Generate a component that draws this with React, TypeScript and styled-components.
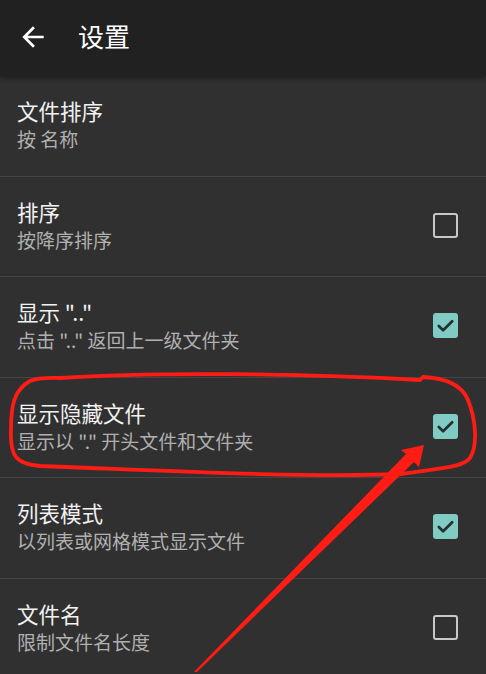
import React from 'react'
import styled, { createGlobalStyle } from 'styled-components'

type Pref = {
  title: string
  summary: string
  checked?: boolean
}

const PREFS: Pref[] = [
  { title: '文件排序', summary: '按 名称' },
  { title: '排序', summary: '按降序排序', checked: false },
  { title: '显示 ".."', summary: '点击 ".." 返回上一级文件夹', checked: true },
  { title: '显示隐藏文件', summary: '显示以 "." 开头文件和文件夹', checked: true },
  { title: '列表模式', summary: '以列表或网格模式显示文件', checked: true },
  { title: '文件名', summary: '限制文件名长度', checked: false },
]

const GlobalStyle = createGlobalStyle`
  html, body {
    margin: 0;
    padding: 0;
    background: #303030;
  }
  body {
    font-family: Roboto, "Noto Sans CJK SC", sans-serif;
  }
`

export default function App() {
  return (
    <Page>
      <GlobalStyle />
      <Toolbar>
        <BackButton>
          <svg width="32" height="32" viewBox="0 0 24 24">
            <path fill="#fff" d="M20 11H7.83l5.59-5.59L12 4l-8 8 8 8 1.41-1.41L7.83 13H20v-2z" />
          </svg>
        </BackButton>
        <ToolbarTitle>设置</ToolbarTitle>
      </Toolbar>
      <List>
        {PREFS.map((p) => (
          <Row key={p.title}>
            <Texts>
              <Title>{p.title}</Title>
              <Summary>{p.summary}</Summary>
            </Texts>
            {p.checked !== undefined && <Checkbox checked={p.checked} />}
          </Row>
        ))}
      </List>
      <Markup width="486" height="674" viewBox="0 0 486 674">
        <path
          d="M 60 378 C 150 372, 300 373, 420 380 L 423 377 C 445 378, 462 385, 468 400 C 476 420, 478 445, 470 458 C 462 468, 440 468, 400 474 C 300 478, 150 470, 40 466 C 15 464, 10 455, 11 430 C 11 405, 14 390, 30 381 C 40 377, 50 378, 60 378 Z"
          fill="none"
          stroke="#ff1c14"
          strokeWidth="3.8"
          strokeLinejoin="round"
        />
        <polygon
          points="194,672 406,454 401,450 424,445 419,467 414,462 197,672"
          fill="#ff1c14"
        />
      </Markup>
    </Page>
  )
}

function Checkbox({ checked }: { checked: boolean }) {
  return (
    <Box checked={checked}>
      {checked && (
        <svg width="23" height="23" viewBox="0 0 24 24">
          <path
            d="M5 12.5l4.5 4.5L19 7.5"
            fill="none"
            stroke="#263030"
            strokeWidth="2.8"
            strokeLinecap="round"
            strokeLinejoin="round"
          />
        </svg>
      )}
    </Box>
  )
}

const Page = styled.div`
  position: relative;
  width: 486px;
  height: 674px;
  overflow: hidden;
  background: #303030;
`

const Toolbar = styled.header`
  position: relative;
  z-index: 1;
  display: flex;
  align-items: center;
  box-sizing: border-box;
  height: 76px;
  padding: 0 0 3px 17px;
  background: #212121;
  box-shadow: 0 2px 6px rgba(0, 0, 0, 0.45);
`

const BackButton = styled.div`
  display: flex;
  width: 32px;
  height: 32px;
  margin-right: 29px;
`

const ToolbarTitle = styled.h1`
  margin: 0 0 2px;
  font-size: 26px;
  font-weight: 400;
  color: #ffffff;
  font-family: "Noto Sans CJK SC", sans-serif;
`

const List = styled.div`
  display: flex;
  flex-direction: column;
`

const Row = styled.div`
  display: flex;
  align-items: center;
  box-sizing: border-box;
  height: 100.5px;
  padding: 0 28px 2px 17px;
  border-bottom: 1px solid #444444;
`

const Texts = styled.div`
  display: flex;
  flex-direction: column;
  flex: 1;
  font-family: "Noto Sans CJK SC", sans-serif;
`

const Title = styled.div`
  font-size: 21.5px;
  line-height: 29px;
  color: #f2f2f2;
`

const Summary = styled.div`
  font-size: 19px;
  line-height: 28px;
  color: #b0b0b0;
`

const Box = styled.div<{ checked: boolean }>`
  display: flex;
  align-items: center;
  justify-content: center;
  box-sizing: border-box;
  width: 25px;
  height: 25px;
  border-radius: 3px;
  background: ${(p) => (p.checked ? '#80cbc4' : 'transparent')};
  border: ${(p) => (p.checked ? 'none' : '2.5px solid #c8c8c8')};
`

const Markup = styled.svg`
  position: absolute;
  left: 0;
  top: 0;
  pointer-events: none;
`
